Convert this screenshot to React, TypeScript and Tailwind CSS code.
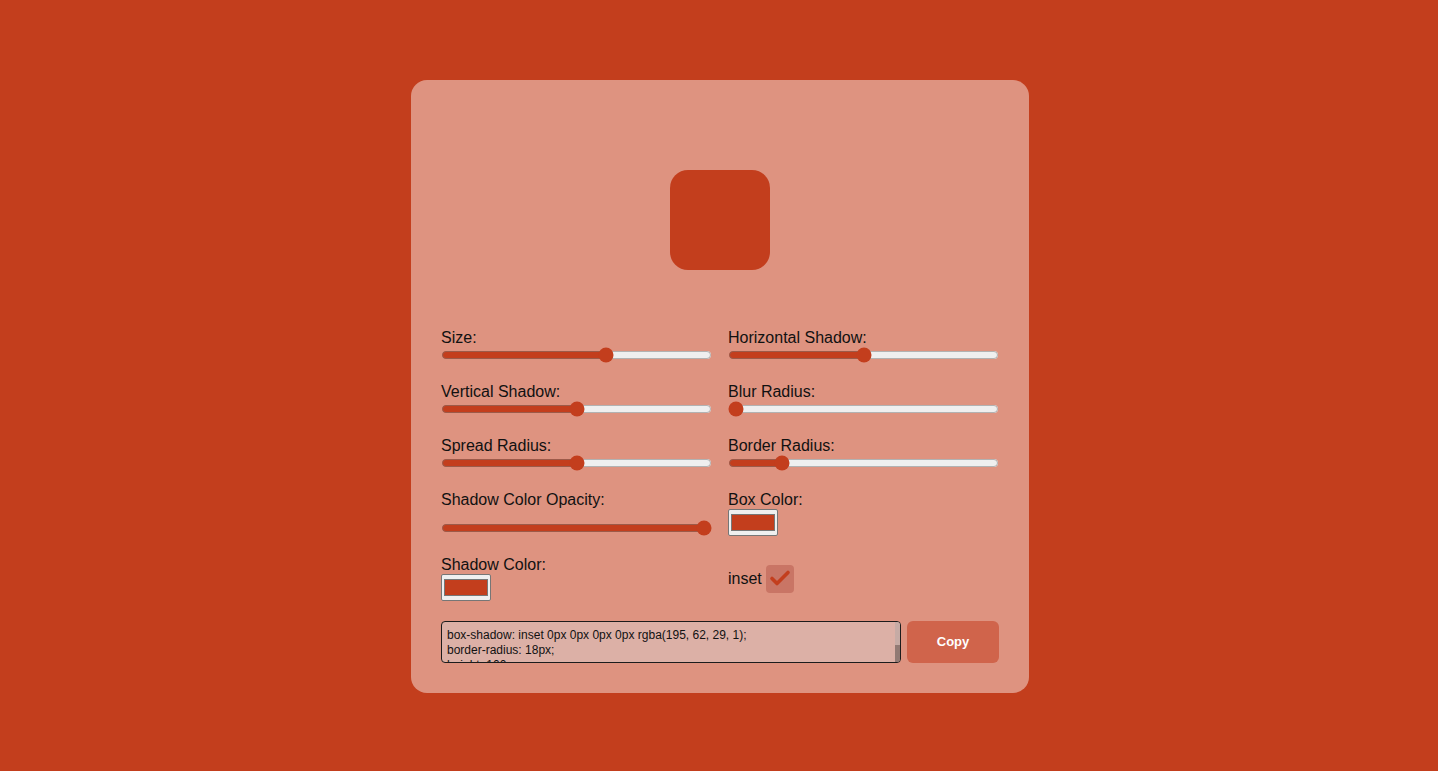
import { useState } from "react"

const ACCENT = "#c33e1d"

function hexToRgb(hex: string) {
  const n = parseInt(hex.slice(1), 16)
  return `${(n >> 16) & 255}, ${(n >> 8) & 255}, ${n & 255}`
}

function Slider({ label, min, max, step = 1, value, onChange }: { label: string; min: number; max: number; step?: number; value: number; onChange: (v: number) => void }) {
  return (
    <div className="flex flex-col">
      <label className="block leading-[18px]">{label}</label>
      <input
        type="range"
        min={min}
        max={max}
        step={step}
        value={value}
        onChange={(e) => onChange(Number(e.target.value))}
        className="w-full h-4 accent-[#c33e1d]"
      />
    </div>
  )
}

function ColorPicker({ label, value, onChange }: { label: string; value: string; onChange: (v: string) => void }) {
  return (
    <div className="flex flex-col">
      <span className="block leading-[18px]">{label}</span>
      <label className="w-[50px] h-[27px] border border-[#767676] rounded-[2px] bg-[#efefef] px-[2px] py-[4px] cursor-pointer">
        <div className="h-full border border-[#777]" style={{ background: value }} />
        <input type="color" value={value} onChange={(e) => onChange(e.target.value)} className="hidden" />
      </label>
    </div>
  )
}

export default function App() {
  const [size, setSize] = useState(100)
  const [h, setH] = useState(0)
  const [v, setV] = useState(0)
  const [blur, setBlur] = useState(0)
  const [spread, setSpread] = useState(0)
  const [radius, setRadius] = useState(18)
  const [opacity, setOpacity] = useState(1)
  const [boxColor, setBoxColor] = useState(ACCENT)
  const [shadowColor, setShadowColor] = useState(ACCENT)
  const [inset, setInset] = useState(true)

  const shadow = `${inset ? "inset " : ""}${h}px ${v}px ${blur}px ${spread}px rgba(${hexToRgb(shadowColor)}, ${opacity})`
  const css = `box-shadow: ${shadow};
border-radius: ${radius}px;
height: ${size}px;
width: ${size}px;
background: ${boxColor};`

  return (
    <div className="min-h-screen bg-[#c33e1d] flex justify-center pt-20 pl-[2px] font-['Liberation_Sans',Arial,sans-serif] text-[#111]">
      <div className="w-[618px] h-[613px] bg-[#de9380] rounded-2xl p-[30px] flex flex-col">
        {/* Preview */}
        <div className="h-[220px] flex items-center justify-center">
          <div style={{ borderRadius: radius, width: size, height: size, background: boxColor, boxShadow: shadow }} />
        </div>

        {/* Controls */}
        <div className="grid grid-cols-2 gap-x-4 gap-y-5">
          <Slider label="Size:" min={20} max={150} value={size} onChange={setSize} />
          <Slider label="Horizontal Shadow:" min={-50} max={50} value={h} onChange={setH} />
          <Slider label="Vertical Shadow:" min={-50} max={50} value={v} onChange={setV} />
          <Slider label="Blur Radius:" min={0} max={100} value={blur} onChange={setBlur} />
          <Slider label="Spread Radius:" min={-50} max={50} value={spread} onChange={setSpread} />
          <Slider label="Border Radius:" min={0} max={100} value={radius} onChange={setRadius} />

          <div className="flex flex-col justify-between">
            <label className="block leading-[18px]">Shadow Color Opacity:</label>
            <input
              type="range"
              min={0}
              max={1}
              step={0.01}
              value={opacity}
              onChange={(e) => setOpacity(Number(e.target.value))}
              className="w-full h-4 accent-[#c33e1d]"
            />
          </div>
          <ColorPicker label="Box Color:" value={boxColor} onChange={setBoxColor} />

          <ColorPicker label="Shadow Color:" value={shadowColor} onChange={setShadowColor} />
          <div className="flex items-center gap-1">
            <span className="leading-[18px]">inset</span>
            <button
              onClick={() => setInset(!inset)}
              className="w-7 h-7 rounded bg-[#c97565] flex items-center justify-center"
            >
              {inset && (
                <svg width="28" height="28" viewBox="0 0 28 28" fill="none">
                  <path d="M6 13.5 L11 18.5 L22 7.5" stroke={ACCENT} strokeWidth="3.6" strokeLinecap="round" strokeLinejoin="round" />
                </svg>
              )}
            </button>
          </div>
        </div>

        {/* Output */}
        <div className="flex gap-1.5 mt-5">
          <div className="relative flex-1 h-[42px]">
            <textarea
              readOnly
              value={css}
              className="w-full h-full block resize-none overflow-hidden rounded border border-[#1c1c1c] bg-[#dcb0a6] pl-[5px] pr-3 pt-[6px] text-[12px] leading-[15px] outline-none"
            />
            {/* scrollbar */}
            <div className="absolute right-[1px] top-[1px] bottom-[1px] w-[5px] flex flex-col rounded-r-[3px] overflow-hidden">
              <div className="h-[23px] bg-[#c6aba5]" />
              <div className="flex-1 bg-[#927a74]" />
            </div>
          </div>
          <button
            onClick={() => navigator.clipboard?.writeText(css)}
            className="w-[92px] h-[42px] rounded-md bg-[#d0644b] text-white font-bold text-[13px]"
          >
            Copy
          </button>
        </div>
      </div>
    </div>
  )
}
